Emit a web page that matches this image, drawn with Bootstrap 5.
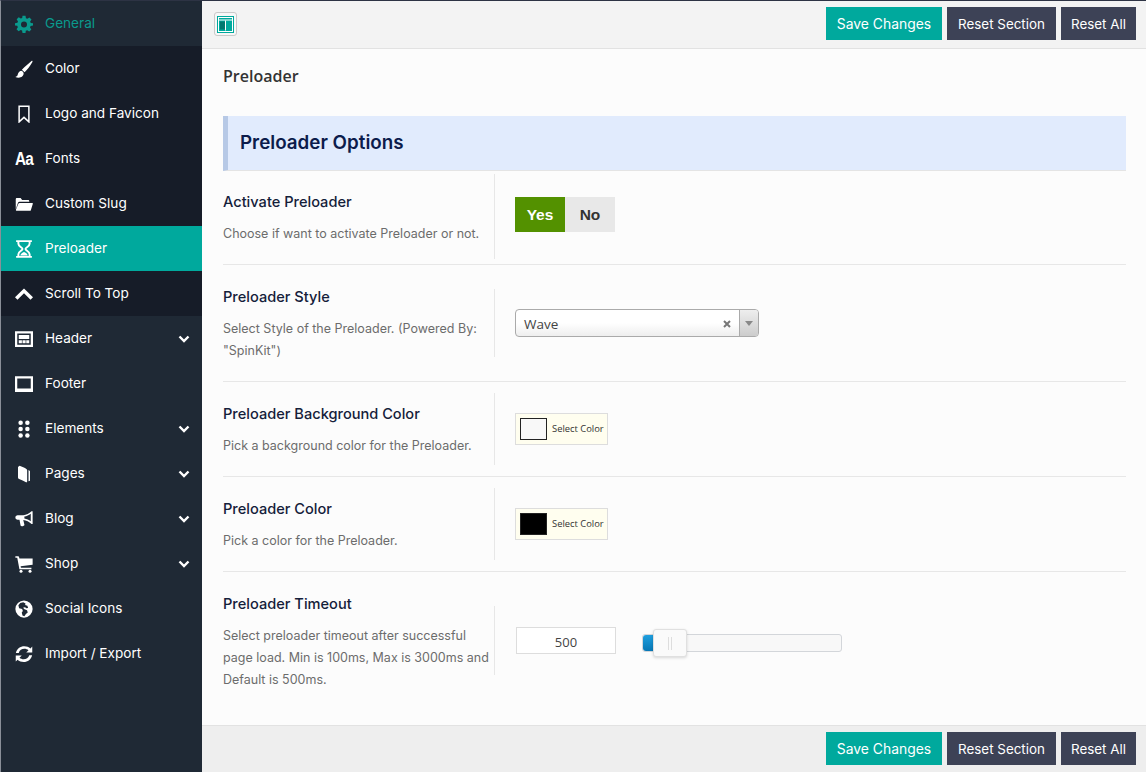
<!DOCTYPE html>
<html lang="en">
<head>
  <meta charset="UTF-8" />
  <meta name="viewport" content="width=device-width, initial-scale=1" />
  <title>Preloader</title>
  <link href="https://cdn.jsdelivr.net/npm/bootstrap@5.3.0/dist/css/bootstrap.min.css" rel="stylesheet" />
  <script src="https://cdn.jsdelivr.net/npm/bootstrap@5.3.0/dist/js/bootstrap.bundle.min.js"></script>
  <style>
    html, body { height: 100%; }
    body {
      background: #fcfcfc;
      font-family: "Inter", "Liberation Sans", sans-serif;
      border-top: 1px solid #2d3344;
      border-left: 1px solid #8a8f98;
      overflow: hidden;
    }
    .app-shell { height: 771px; }

    /* sidebar */
    .side-menu { width: 201px; flex-shrink: 0; background: #1f2935; }
    .side-item {
      height: 45px;
      padding-left: 14px;
      padding-right: 12px;
      color: #fff;
      font-size: 13.6px;
      font-weight: 400;
      text-decoration: none;
    }
    .side-item:hover { color: #fff; }
    .side-sub { background: #161c28; }
    .side-item.is-current { color: #0a9a8d; }
    .side-item.is-active { background: #00a99d; }
    .side-icon { width: 18px; height: 18px; margin-right: 12px; flex-shrink: 0; fill: currentColor; }
    .aa-icon {
      width: 18px; margin-right: 12px;
      font-family: "Liberation Sans", sans-serif; font-weight: 700; font-size: 18px; letter-spacing: -1px; line-height: 18px;
      transform: scaleX(.85); transform-origin: left center;
    }
    .side-chev { width: 12px; height: 12px; fill: none; stroke: #fff; stroke-width: 2.4; margin-left: auto; }

    /* bars */
    .top-strip { height: 48px; background: #f3f3f3; border-bottom: 1px solid #e2e2e2; padding: 6px 10px 0 12px; }
    .bottom-strip { height: 47px; background: #eeeeee; border-top: 1px solid #e2e2e2; padding: 6px 10px 0 12px; }
    .btn-set { gap: 5px; }
    .layout-toggle {
      width: 23px; height: 24px; margin-top: 5px;
      border: 1px solid #c9c9c9; border-radius: 3px; background: #f7f7f7;
    }
    .act-btn {
      height: 33px;
      border-radius: 0;
      border: 0;
      padding: 2px 0 0;
      font-size: 13.4px;
      font-weight: 400;
      line-height: 31px;
      color: #fff;
      background: #3d4256;
      text-align: center;
    }
    .act-btn:hover { color: #fff; background: #3d4256; }
    .act-btn.is-save { background: #00a99d; width: 116px; font-size: 13.9px; }
    .act-btn.is-section { width: 109px; }
    .act-btn.is-all { width: 75px; }

    /* content */
    .form-area { padding: 0 20px 0 21px; }
    .sect-title { font-family: "Open Sans", sans-serif; font-size: 16px; font-weight: 600; color: #333; margin: 0; height: 67px; padding-top: 17px; line-height: 20px; }
    .sect-band {
      height: 55px;
      background: #e1ebfd;
      border-left: 5px solid #b7c9e6;
      border-bottom: 1px solid #e4e4e4;
      padding-left: 12px;
      color: #0c1c4c;
      font-size: 18.8px;
      font-weight: 600;
    }
    .opt-row { border-bottom: 1px solid #e7e7e7; }
    .opt-row:last-child { border-bottom: 0; }
    .opt-left { width: 272px; flex-shrink: 0; border-right: 1px solid #e7e7e7; }
    .opt-right { padding-left: 20px; }
    .opt-name { font-size: 14.6px; font-weight: 500; color: #14203a; line-height: 20px; margin-bottom: 11px; white-space: nowrap; }
    .opt-desc { font-size: 12.5px; color: #6c6c6c; line-height: 22px; margin: 0; white-space: nowrap; }
    .row-a { height: 94px; padding-top: 3px; }
    .row-a .opt-left { height: 85px; padding-top: 18px; }
    .row-a .opt-right { padding-top: 23px; }
    .row-b { height: 117px; padding-top: 24px; }
    .row-b .opt-left { height: 68px; }
    .row-b .opt-name { margin-top: -2px; }
    .row-b .opt-right { padding-top: 20px; }
    .row-c { height: 95px; padding-top: 11px; }
    .row-c .opt-left { height: 72px; padding-top: 11px; }
    .row-c .opt-right { padding-top: 20px; }
    .row-d { height: 153px; padding-top: 34px; }
    .row-d .opt-left { height: 69px; }
    .row-d .opt-name { margin-top: -12px; }
    .row-d .opt-right { padding-top: 21px; }

    .yes-no { font-family: "Liberation Sans", sans-serif; font-size: 15.5px; font-weight: 700; height: 35px; line-height: 35px; text-align: center; width: 50px; }
    .yes-on { background: #539100; color: #fff; }
    .no-off { background: #e8e8e8; color: #333; }

    .pick-box {
      width: 244px; height: 28px;
      border: 1px solid #aaa; border-radius: 4px;
      background: linear-gradient(#fff 50%, #eee);
      font-family: "Open Sans", sans-serif;
      font-size: 13.5px;
      color: #444;
    }
    .pick-text { padding-left: 8px; padding-top: 2px; flex-grow: 1; }
    .pick-x { width: 8px; height: 8px; margin-right: 8px; margin-top: 2px; stroke: #777; stroke-width: 2; }
    .pick-arrow { width: 19px; height: 100%; border-left: 1px solid #aaa; background: linear-gradient(#eee, #ccc); border-radius: 0 3px 3px 0; }
    .pick-caret { width: 0; height: 0; border: 4px solid transparent; border-top: 5px solid #888; border-bottom: 0; }

    .swatch-box {
      width: 93px; height: 32px;
      background: #fffeef; border: 1px solid #ddd;
      padding-left: 4px;
      font-family: "Open Sans", sans-serif;
      font-size: 9.4px;
      color: #333;
      white-space: nowrap;
    }
    .swatch-chip { width: 27px; height: 22px; border: 1px solid #222; margin-right: 5px; flex-shrink: 0; }
    .chip-light { background: #f8f8f8; }
    .chip-dark { background: #000; }

    .num-box {
      width: 100px; height: 27px; margin-left: 1px;
      background: #fff; border: 1px solid #ddd;
      font-family: "Open Sans", sans-serif; font-size: 13px; color: #444;
      text-align: center; line-height: 28px;
    }
    .slider-track {
      width: 200px; height: 18px; margin-left: 26px; margin-top: 7px;
      background: #f8f8f8; border: 1px solid #d3d6da; border-radius: 3px;
    }
    .slider-fill { width: 16px; height: 100%; background: linear-gradient(#1f9fdf, #0777b5); border-radius: 3px 0 0 3px; }
    .slider-knob {
      position: absolute; left: 10px; top: -6px;
      width: 34px; height: 28px;
      background: #fafafa; border: 1px solid #e0e0e0; border-radius: 3px;
      box-shadow: 0 1px 3px rgba(0,0,0,.15);
    }
    .slider-knob::after {
      content: "";
      position: absolute; left: 14px; top: 7px;
      width: 4px; height: 13px;
      border-left: 1px solid #ddd; border-right: 1px solid #ddd;
    }
  </style>
</head>
<body>
<div class="app-shell d-flex">

  <!-- sidebar -->
  <div class="side-menu">
    <a href="#" class="side-item is-current d-flex align-items-center">
      <svg class="side-icon" viewBox="0 0 24 24"><path fill-rule="evenodd" d="M10 1h4l.6 3.200 1.900.8 2.700-1.800 2.800 2.800-1.800 2.700.8 1.900L24 11v3l-3.200.6-.8 1.900 1.800 2.700-2.800 2.800-2.700-1.800-1.900.8L14 24h-4l-.6-3.200-1.900-.8-2.700 1.800L2 19l1.800-2.700-.8-1.900L0 14v-3l3.200-.6.8-1.900L2.200 5.800 5 3l2.700 1.800 1.900-.8zM12 8.500a4 4 0 1 0 0 8 4 4 0 0 0 0-8z"/></svg>
      General
    </a>
    <div class="side-sub">
      <a href="#" class="side-item d-flex align-items-center">
        <svg class="side-icon" viewBox="0 0 24 24"><path d="M23 1c.6.500.4 1.300-.2 2.300C20 8 16 13.500 12.800 16.300l-3.600-3.400C12.500 9.500 18.500 4 22 1.200c.4-.3.700-.4 1-.2zM8.300 14.200c1.900.5 3 1.700 3.200 3.500.2 3.600-3.200 5.800-6.500 5.800-1.800 0-3.400-.5-4.500-1 1.600-.3 2.500-.9 3-2.400.6-2.900 2.100-5.500 4.800-5.900z"/></svg>
        Color
      </a>
      <a href="#" class="side-item d-flex align-items-center">
        <svg class="side-icon" viewBox="0 0 24 24"><path fill="none" stroke="currentColor" stroke-width="2" d="M5.500 1.500h13v21l-6.500-6-6.500 6z"/></svg>
        Logo and Favicon
      </a>
      <a href="#" class="side-item d-flex align-items-center">
        <span class="aa-icon">Aa</span>
        Fonts
      </a>
      <a href="#" class="side-item d-flex align-items-center">
        <svg class="side-icon" viewBox="0 0 24 24"><path d="M1 19V5.500C1 4.700 1.700 4 2.500 4h5l2 2.500h8c.8 0 1.500.7 1.500 1.500v1H6c-1 0-1.700.5-2 1.300zM6 10.500h17c.7 0 1 .5.800 1.200L21 20.500c-.2.400-.5.500-1 .5H2c-.7 0-1-.5-.8-1.200L4.500 11.500c.2-.6.800-1 1.500-1z"/></svg>
        Custom Slug
      </a>
      <a href="#" class="side-item is-active d-flex align-items-center">
        <svg class="side-icon" viewBox="0 0 24 24"><path fill="none" stroke="currentColor" stroke-width="2.600" d="M1.500 1.500h21M1.500 22.500h21M4.500 2v3c0 4 5.500 5 5.500 7s-5.500 3-5.500 7v3M19.500 2v3c0 4-5.500 5-5.500 7s5.500 3 5.500 7v3"/><path d="M7 20.500c1-2.500 3-4 5-4.500 2 .5 4 2 5 4.500z"/></svg>
        Preloader
      </a>
      <a href="#" class="side-item d-flex align-items-center">
        <svg class="side-icon" viewBox="0 0 24 24"><path d="M12 4.500l12 11.700-3.300 3.300L12 11 3.300 19.500 0 16.200z"/></svg>
        Scroll To Top
      </a>
    </div>
    <a href="#" class="side-item d-flex align-items-center">
      <svg class="side-icon" viewBox="0 0 24 24"><path fill-rule="evenodd" d="M0 1.500h24v21H0zM3 4.500v15h18v-15zM5 6.500h14v5.500H5zM5 13.500h4.200V17.500H5zM10 13.500h4.200V17.500H10zM15 13.500h4V17.500h-4z"/></svg>
      Header
      <svg class="side-chev" viewBox="0 0 12 12"><path d="M1.500 3.500L6 8l4.500-4.500"/></svg>
    </a>
    <a href="#" class="side-item d-flex align-items-center">
      <svg class="side-icon" viewBox="0 0 24 24"><path fill-rule="evenodd" d="M0 1.500h24v21H0zM3 4.500v13.500h18V4.500z"/></svg>
      Footer
    </a>
    <a href="#" class="side-item d-flex align-items-center">
      <svg class="side-icon" viewBox="0 0 24 24"><circle cx="7.500" cy="3.500" r="3"/><circle cx="16.500" cy="3.500" r="3"/><circle cx="7.500" cy="12" r="3"/><circle cx="16.500" cy="12" r="3"/><circle cx="7.500" cy="20.500" r="3"/><circle cx="16.500" cy="20.500" r="3"/></svg>
      Elements
      <svg class="side-chev" viewBox="0 0 12 12"><path d="M1.500 3.500L6 8l4.500-4.500"/></svg>
    </a>
    <a href="#" class="side-item d-flex align-items-center">
      <svg class="side-icon" viewBox="0 0 24 24"><path d="M4 2.500L6 1c3.500 1 6.800 2.500 9.500 4.500.5.300.7.800.7 1.300V22c0 1-.7 1.400-1.500 1-3-1.900-6-3.500-9.200-4.500C4.500 18.200 4 17.500 4 16.500zM18 6.500l1.500 1c.3.200.5.600.5 1V21l-2 .8z"/></svg>
      Pages
      <svg class="side-chev" viewBox="0 0 12 12"><path d="M1.500 3.500L6 8l4.500-4.500"/></svg>
    </a>
    <a href="#" class="side-item d-flex align-items-center">
      <svg class="side-icon" viewBox="0 0 24 24"><path fill-rule="evenodd" d="M22 1.500h1.500v17H22c-3-2.800-7-4.700-11-5.200l1.500 6c.2.800-.2 1.700-2.200 2.200-1.800.4-2.600-.2-2.900-1L6 13H3.500C1.800 13 .5 11.700.5 10s1.300-3 3-3H11c4-.5 8-2.700 11-5.500zM21 5c-2.500 1.900-5.400 3.300-8.500 3.800v2.600c3.100.5 6 1.800 8.500 3.700z"/></svg>
      Blog
      <svg class="side-chev" viewBox="0 0 12 12"><path d="M1.500 3.500L6 8l4.500-4.500"/></svg>
    </a>
    <a href="#" class="side-item d-flex align-items-center">
      <svg class="side-icon" viewBox="0 0 24 24"><path d="M.5 1.500h3.800c.5 0 .9.300 1 .8l.6 2.200H23.500v8.500L7.500 15l.4 2h14v2h-16L3 3.500H.5z"/><circle cx="8" cy="21.500" r="2"/><circle cx="20" cy="21.500" r="2"/></svg>
      Shop
      <svg class="side-chev" viewBox="0 0 12 12"><path d="M1.500 3.500L6 8l4.500-4.500"/></svg>
    </a>
    <a href="#" class="side-item d-flex align-items-center">
      <svg class="side-icon" viewBox="0 0 24 24"><path fill-rule="evenodd" d="M12 .5a11.500 11.500 0 1 1 0 23 11.500 11.500 0 0 1 0-23zM7 4l-2.500 3 1 4 4 1 1 2.500-1.500 2 1 4 2.500 1 2-3 2.500-2-1-3-4-1.500-1-2 2.500-.5 1.500 1.500 2.500-.5-1-3-3-1 .5-2-3-1.500z"/></svg>
      Social Icons
    </a>
    <a href="#" class="side-item d-flex align-items-center">
      <svg class="side-icon" viewBox="0 0 24 24"><path d="M23 2v8h-8l3-3c-1.500-1.300-3.600-2-5.500-2C9 5 6 7 5 10.500H1.200C2.300 5 7 1.500 12.500 1.500c3 0 6 1.100 8.100 3zM1 22v-8h8l-3 3c1.500 1.300 3.600 2 5.500 2 3.500 0 6.500-2 7.500-5.500h3.800C21.700 19 17 22.500 11.500 22.500c-3 0-6-1.100-8.100-3z"/></svg>
      Import / Export
    </a>
  </div>

  <!-- main -->
  <div class="flex-grow-1 d-flex flex-column">
    <div class="top-strip d-flex">
      <div class="layout-toggle d-flex align-items-center justify-content-center">
        <svg width="17" height="17" viewBox="0 0 17 17"><rect width="17" height="17" fill="#00a99d"/><rect x="1.500" y="1.500" width="14" height="14" fill="none" stroke="#fff"/><rect x="2" y="3.500" width="13" height="1" fill="#fff"/><rect x="3" y="5.500" width="5" height="8" fill="#00786f"/><rect x="8" y="4.500" width="1" height="10" fill="#fff"/></svg>
      </div>
      <div class="ms-auto d-flex btn-set">
        <button class="btn act-btn is-save">Save Changes</button>
        <button class="btn act-btn is-section">Reset Section</button>
        <button class="btn act-btn is-all">Reset All</button>
      </div>
    </div>

    <div class="form-area flex-grow-1">
      <h2 class="sect-title">Preloader</h2>
      <div class="sect-band d-flex align-items-center">Preloader Options</div>

      <div class="opt-row row-a d-flex">
        <div class="opt-left">
          <div class="opt-name">Activate Preloader</div>
          <p class="opt-desc">Choose if want to activate Preloader or not.</p>
        </div>
        <div class="opt-right d-flex align-items-start">
          <div class="yes-no yes-on">Yes</div>
          <div class="yes-no no-off">No</div>
        </div>
      </div>

      <div class="opt-row row-b d-flex">
        <div class="opt-left">
          <div class="opt-name">Preloader Style</div>
          <p class="opt-desc">Select Style of the Preloader. (Powered By:<br />"SpinKit")</p>
        </div>
        <div class="opt-right">
          <div class="pick-box d-flex align-items-center">
            <span class="pick-text">Wave</span>
            <svg class="pick-x" viewBox="0 0 8 8"><path d="M1 1l6 6M7 1L1 7"/></svg>
            <span class="pick-arrow d-flex align-items-center justify-content-center"><span class="pick-caret"></span></span>
          </div>
        </div>
      </div>

      <div class="opt-row row-c d-flex">
        <div class="opt-left">
          <div class="opt-name">Preloader Background Color</div>
          <p class="opt-desc">Pick a background color for the Preloader.</p>
        </div>
        <div class="opt-right">
          <div class="swatch-box d-flex align-items-center"><span class="swatch-chip chip-light"></span>Select Color</div>
        </div>
      </div>

      <div class="opt-row row-c d-flex">
        <div class="opt-left">
          <div class="opt-name">Preloader Color</div>
          <p class="opt-desc">Pick a color for the Preloader.</p>
        </div>
        <div class="opt-right">
          <div class="swatch-box d-flex align-items-center"><span class="swatch-chip chip-dark"></span>Select Color</div>
        </div>
      </div>

      <div class="opt-row row-d d-flex">
        <div class="opt-left">
          <div class="opt-name">Preloader Timeout</div>
          <p class="opt-desc">Select preloader timeout after successful<br />page load. Min is 100ms, Max is 3000ms and<br />Default is 500ms.</p>
        </div>
        <div class="opt-right d-flex align-items-start">
          <div class="num-box">500</div>
          <div class="slider-track position-relative">
            <div class="slider-fill"></div>
            <div class="slider-knob"></div>
          </div>
        </div>
      </div>
    </div>

    <div class="bottom-strip d-flex">
      <div class="ms-auto d-flex btn-set">
        <button class="btn act-btn is-save">Save Changes</button>
        <button class="btn act-btn is-section">Reset Section</button>
        <button class="btn act-btn is-all">Reset All</button>
      </div>
    </div>
  </div>
</div>
</body>
</html>
